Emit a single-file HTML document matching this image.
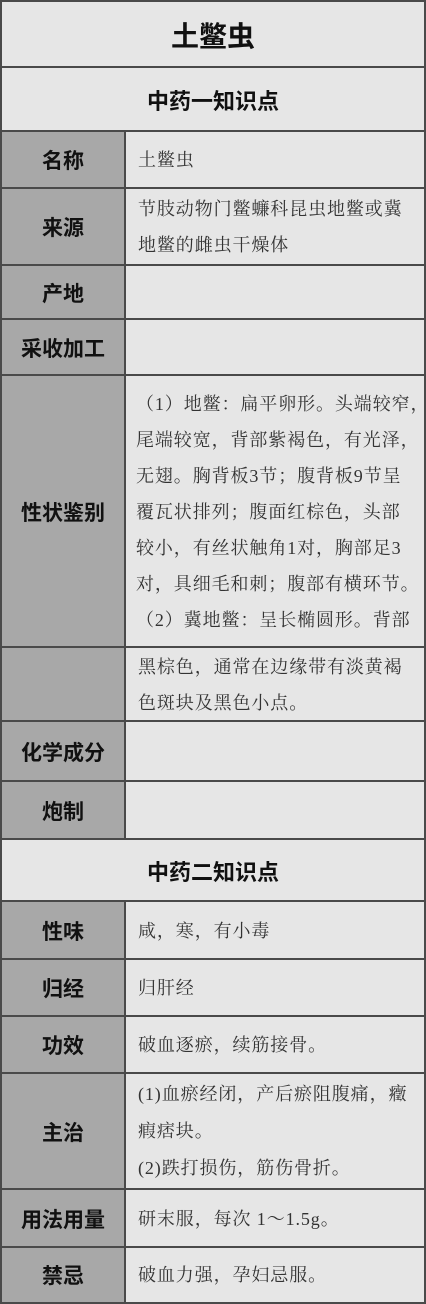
<!DOCTYPE html>
<html><head><meta charset="utf-8"><style>
*{margin:0;padding:0;box-sizing:border-box}
body{width:426px;height:1304px;background:#e6e6e6;position:relative;overflow:hidden;font-family:"Liberation Sans","Noto Sans CJK SC",sans-serif;color:#111}
.r{position:absolute;left:0;width:426px;border-top:2px solid #4a4a4a;border-left:2px solid #4a4a4a;border-right:2px solid #4a4a4a}
.h{display:flex;align-items:center;justify-content:center;font-weight:bold;background:#e6e6e6}
.l{position:absolute;left:0;top:0;bottom:0;width:124px;background:#a8a8a8;border-right:2px solid #4a4a4a;display:flex;align-items:center;justify-content:center;font-weight:bold;font-size:21px}
.c{position:absolute;left:126px;right:0;top:0;bottom:0;padding-left:10px;display:flex;flex-direction:column;justify-content:center;font-family:"Liberation Serif","Noto Serif CJK SC",serif;font-size:18px;letter-spacing:0.9px;color:#333;line-height:36px;white-space:nowrap}
</style></head><body>
<div class="r h" style="top:0;height:67px;font-size:28px">土鳖虫</div>
<div class="r h" style="top:66px;height:65px;font-size:22px">中药一知识点</div>
<div class="r" style="top:130px;height:58px"><div class="l">名称</div><div class="c">土鳖虫</div></div>
<div class="r" style="top:187px;height:78px"><div class="l">来源</div><div class="c">节肢动物门鳖蠊科昆虫地鳖或冀<br>地鳖的雌虫干燥体</div></div>
<div class="r" style="top:264px;height:55px"><div class="l">产地</div><div class="c"></div></div>
<div class="r" style="top:318px;height:57px"><div class="l">采收加工</div><div class="c"></div></div>
<div class="r" style="top:374px;height:273px"><div class="l">性状鉴别</div><div class="c" style="padding-left:8px">（1）地鳖：扁平卵形。头端较窄，<br>尾端较宽，背部紫褐色，有光泽，<br>无翅。胸背板3节；腹背板9节呈<br>覆瓦状排列；腹面红棕色，头部<br>较小，有丝状触角1对，胸部足3<br>对，具细毛和刺；腹部有横环节。<br>（2）冀地鳖：呈长椭圆形。背部</div></div>
<div class="r" style="top:646px;height:75px"><div class="l"></div><div class="c">黑棕色，通常在边缘带有淡黄褐<br>色斑块及黑色小点。</div></div>
<div class="r" style="top:720px;height:61px"><div class="l">化学成分</div><div class="c"></div></div>
<div class="r" style="top:780px;height:59px"><div class="l">炮制</div><div class="c"></div></div>
<div class="r h" style="top:838px;height:63px;font-size:22px">中药二知识点</div>
<div class="r" style="top:900px;height:59px"><div class="l">性味</div><div class="c">咸，寒，有小毒</div></div>
<div class="r" style="top:958px;height:58px"><div class="l">归经</div><div class="c">归肝经</div></div>
<div class="r" style="top:1015px;height:58px"><div class="l">功效</div><div class="c">破血逐瘀，续筋接骨。</div></div>
<div class="r" style="top:1072px;height:117px"><div class="l">主治</div><div class="c" style="line-height:37px">(1)血瘀经闭，产后瘀阻腹痛，癥<br>瘕痞块。<br>(2)跌打损伤，筋伤骨折。</div></div>
<div class="r" style="top:1188px;height:59px"><div class="l">用法用量</div><div class="c">研末服，每次 1～1.5g。</div></div>
<div class="r" style="top:1246px;height:58px;border-bottom:2px solid #4a4a4a"><div class="l">禁忌</div><div class="c">破血力强，孕妇忌服。</div></div>
</body></html>
